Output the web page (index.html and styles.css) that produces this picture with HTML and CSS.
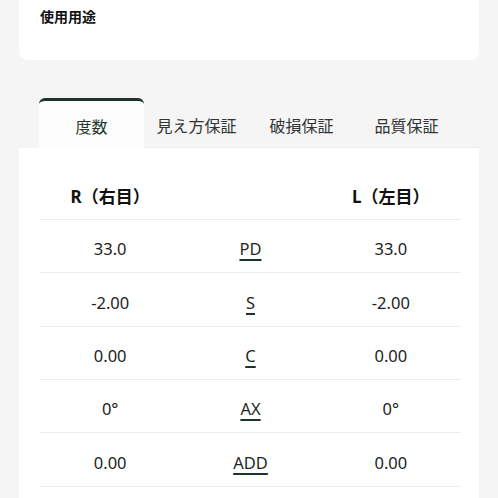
FILE: index.html
```html
<!DOCTYPE html>
<html lang="ja">
<head>
<meta charset="utf-8">
<link rel="stylesheet" href="styles.css">
</head>
<body>
  <section class="usage-card">
    <h2 class="usage-title">使用用途</h2>
  </section>

  <nav class="tabs">
    <div class="tab tab-active">度数</div>
    <div class="tab">見え方保証</div>
    <div class="tab">破損保証</div>
    <div class="tab">品質保証</div>
  </nav>

  <section class="table-card">
    <div class="row row-head">
      <div class="cell">R（右目）</div>
      <div class="cell"></div>
      <div class="cell">L（左目）</div>
    </div>
    <div class="row">
      <div class="cell">33.0</div>
      <div class="cell"><span class="label">PD</span></div>
      <div class="cell">33.0</div>
    </div>
    <div class="row">
      <div class="cell">-2.00</div>
      <div class="cell"><span class="label">S</span></div>
      <div class="cell">-2.00</div>
    </div>
    <div class="row">
      <div class="cell">0.00</div>
      <div class="cell"><span class="label">C</span></div>
      <div class="cell">0.00</div>
    </div>
    <div class="row">
      <div class="cell">0°</div>
      <div class="cell"><span class="label">AX</span></div>
      <div class="cell">0°</div>
    </div>
    <div class="row">
      <div class="cell">0.00</div>
      <div class="cell"><span class="label">ADD</span></div>
      <div class="cell">0.00</div>
    </div>
  </section>
</body>
</html>
```

FILE: styles.css
```css
html, body {
  margin: 0;
  padding: 0;
}

body {
  background: #f4f5f4;
  font-family: "Noto Sans", "Noto Sans CJK JP", sans-serif;
  color: #222;
  width: 498px;
  height: 498px;
  overflow: hidden;
}

.usage-card {
  margin: 0 19px;
  height: 60px;
  background: #fff;
  border-radius: 0 0 8px 8px;
  padding: 6px 21px 0;
  box-sizing: border-box;
}

.usage-title {
  margin: 0;
  font-size: 14px;
  font-weight: 700;
  line-height: 22px;
  color: #111;
}

.tabs {
  display: flex;
  margin: 38px 20px 0 39px;
  border-bottom: 1px solid #ebeceb;
}

.tab {
  flex: 0 0 105px;
  height: 46px;
  margin-top: 3px;
  display: flex;
  align-items: center;
  justify-content: center;
  font-size: 16px;
  color: #333;
  padding-top: 1px;
  box-sizing: border-box;
}

.tab-active {
  margin-top: 0;
  height: 50px;
  margin-bottom: -1px;
  background: #fbfcfb;
  border-top: 3px solid #1e3329;
  border-radius: 6px 6px 0 0;
  color: #24382d;
  padding-top: 3px;
}

.table-card {
  margin: 0 19px;
  background: #fff;
  padding: 24px 18px 0 21px;
  height: 330px;
}

.row {
  display: grid;
  grid-template-columns: 1fr 1fr 1fr;
  align-items: center;
  height: 53.35px;
  box-sizing: border-box;
  border-bottom: 1px solid #ececec;
  font-size: 16.5px;
  color: #222;
}

.row-head {
  height: 48px;
  font-size: 17px;
  font-weight: 700;
  color: #111;
  padding-bottom: 2px;
}

.cell {
  text-align: center;
  padding-top: 5px;
}

.row-head .cell {
  padding-top: 1px;
}

.label {
  color: #1d2a23;
  text-decoration: underline;
  text-decoration-color: #1e3329;
  text-decoration-thickness: 2px;
  text-underline-offset: 4px;
}
```
